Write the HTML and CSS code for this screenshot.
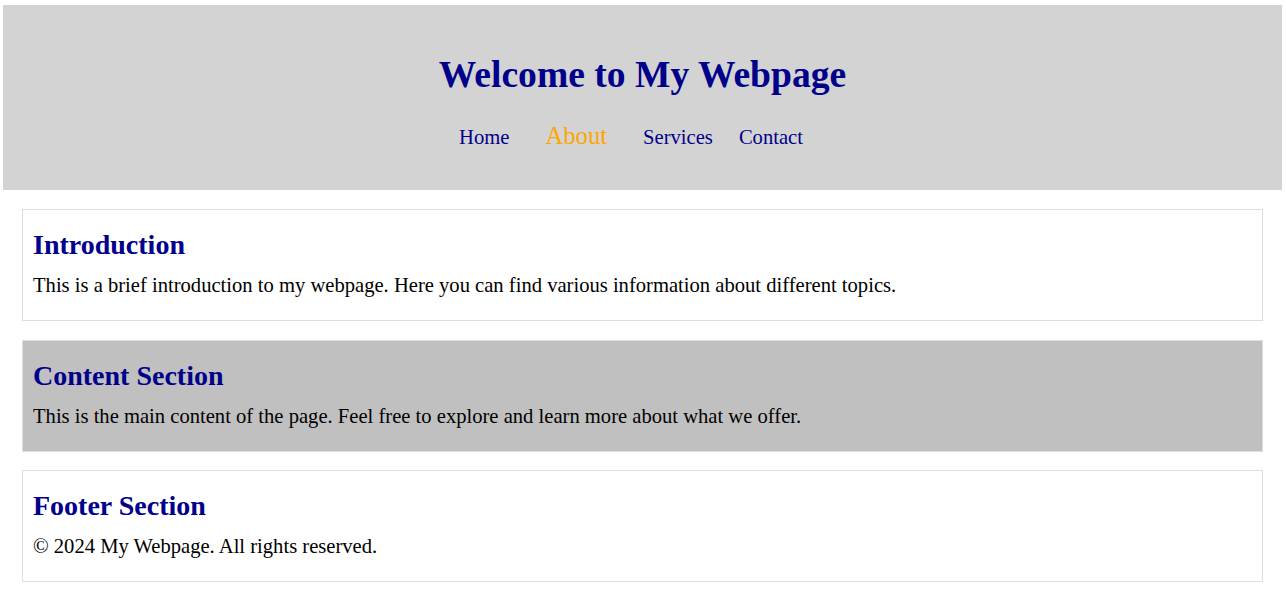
FILE: index.html
```html
<!DOCTYPE html>
<html>
<head>
<meta charset="utf-8">
<title>My Webpage</title>
<link rel="stylesheet" href="styles.css">
</head>
<body>
<header class="site-header">
  <h1 class="site-title">Welcome to My Webpage</h1>
  <nav class="site-nav">
    <a class="nav-link" href="#">Home</a>
    <a class="nav-link nav-link-active" href="#">About</a>
    <a class="nav-link" href="#">Services</a>
    <a class="nav-link" href="#">Contact</a>
  </nav>
</header>
<main class="page">
  <section class="panel">
    <h2 class="panel-title">Introduction</h2>
    <p class="panel-text">This is a brief introduction to my webpage. Here you can find various information about different topics.</p>
  </section>
  <section class="panel panel-alt">
    <h2 class="panel-title">Content Section</h2>
    <p class="panel-text">This is the main content of the page. Feel free to explore and learn more about what we offer.</p>
  </section>
  <section class="panel">
    <h2 class="panel-title">Footer Section</h2>
    <p class="panel-text">© 2024 My Webpage. All rights reserved.</p>
  </section>
</main>
</body>
</html>
```
FILE: styles.css
```css
html, body {
  margin: 0;
  padding: 0;
  background: #ffffff;
}
body {
  font-family: "Liberation Serif", "Times New Roman", serif;
  color: #000000;
}
.site-header {
  margin: 5px 4px 0 3px;
  height: 185px;
  box-sizing: border-box;
  background: #d3d3d3;
  padding-top: 49px;
  text-align: center;
}
.site-title {
  margin: 0;
  font-size: 37.6px;
  line-height: 42px;
  font-weight: bold;
  color: #00008b;
}
.site-nav {
  display: flex;
  justify-content: center;
  align-items: baseline;
  gap: 26px;
  margin-top: 28px;
  padding-right: 23px;
}
.nav-link {
  font-size: 20.6px;
  line-height: 24px;
  color: #00008b;
  text-decoration: none;
}
.nav-link-active {
  font-size: 24.7px;
  padding: 0 10px;
  color: #ffa500;
}
.page {
  display: flex;
  flex-direction: column;
  gap: 18.5px;
  margin: 19px 23px 0 22px;
}
.panel {
  border: 1px solid #dddddd;
  padding: 19px 10px 16px;
  height: 112px;
  box-sizing: border-box;
}
.panel-alt {
  background: #c0c0c0;
}
.panel-title {
  margin: 0 0 12px;
  font-size: 28px;
  line-height: 32px;
  font-weight: bold;
  color: #00008b;
}
.panel-text {
  margin: 0;
  font-size: 20.6px;
  line-height: 24px;
}
```
